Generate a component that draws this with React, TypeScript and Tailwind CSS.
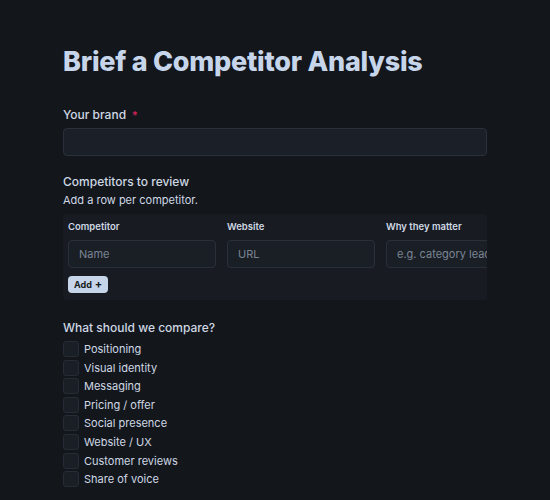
import React from "react";

const ASPECTS = [
  "Positioning",
  "Visual identity",
  "Messaging",
  "Pricing / offer",
  "Social presence",
  "Website / UX",
  "Customer reviews",
  "Share of voice",
];

const COLUMNS = [
  { label: "Competitor", placeholder: "Name" },
  { label: "Website", placeholder: "URL" },
  { label: "Why they matter", placeholder: "e.g. category leader" },
];

export default function App() {
  return (
    <div
      className="min-h-[500px] w-full bg-[#13171c] text-[#cfd8e4]"
      style={{ fontFamily: "Inter, 'Noto Sans', sans-serif" }}
    >
      <div className="w-[424px] ml-[63px] pt-[44px]">
        <h1 className="text-[27px] leading-[36px] font-extrabold text-[#c6d5e9] tracking-[-0.25px]">
          Brief a Competitor Analysis
        </h1>

        <div className="mt-[27px]">
          <label className="flex items-center gap-[6px] text-[12px] leading-[16px] font-medium">
            Your brand <span className="text-[#e0245e] text-[11px]">*</span>
          </label>
          <input className="mt-[5px] block w-full h-[28px] rounded-[4px] border border-[#2a303a] bg-[#1b2028] outline-none" />
        </div>

        <div className="mt-[18px]">
          <div className="text-[12px] leading-[16px] font-medium">Competitors to review</div>
          <div className="mt-[2px] text-[11px] leading-[16px]">Add a row per competitor.</div>

          <div className="mt-[6px] rounded-[4px] bg-[#181c22] overflow-hidden pl-[5px] pt-[7px] pb-[7px]">
            <div className="flex gap-[11px] w-max">
              {COLUMNS.map((c) => (
                <div key={c.label} className="w-[148px]">
                  <div className="text-[9.5px] leading-[12px] font-semibold">{c.label}</div>
                  <input
                    placeholder={c.placeholder}
                    className="mt-[7px] block w-full h-[28px] rounded-[4px] border border-[#2a303a] bg-[#1a1f26] px-[10px] text-[11px] text-[#cfd8e4] placeholder:text-[#7a8594] outline-none"
                  />
                </div>
              ))}
            </div>
            <button className="mt-[8px] flex items-center gap-[3px] h-[17px] px-[6px] rounded-[4px] bg-[#c6d5e9] text-[#151a20] text-[9px] font-bold">
              Add <span className="text-[11px] leading-none">+</span>
            </button>
          </div>
        </div>

        <div className="mt-[20px]">
          <div className="text-[12px] leading-[16px] font-medium">What should we compare?</div>
          <div className="mt-[5px] flex flex-col gap-[2.6px]">
            {ASPECTS.map((a) => (
              <label key={a} className="flex items-center gap-[5px] h-[16px]">
                <span className="w-[16px] h-[16px] rounded-[3px] border border-[#262c35] bg-[#1a1f26]" />
                <span className="text-[11px] leading-[16px]">{a}</span>
              </label>
            ))}
          </div>
        </div>
      </div>
    </div>
  );
}
